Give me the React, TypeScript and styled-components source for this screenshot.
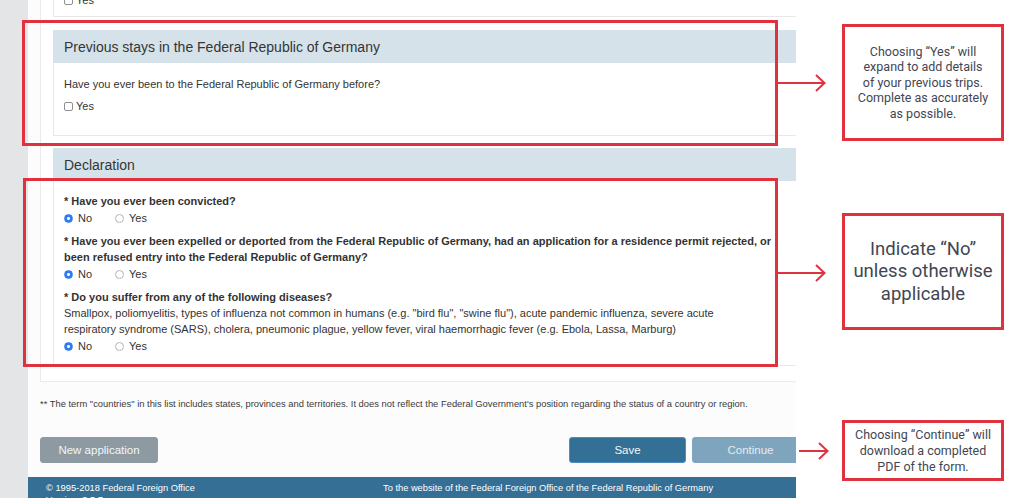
import React from 'react';
import styled, { createGlobalStyle } from 'styled-components';

const colors = {
    red: '#e0313f',
    header: '#d5e2ea',
    border: '#e8e8e8',
    text: '#333333',
    blue: '#346f95',
    note: '#424654',
};

const GlobalStyle = createGlobalStyle`
    html, body {
        margin: 0;
        padding: 0;
        background: #ffffff;
    }
    * {
        box-sizing: border-box;
    }
`;

const Arrow = ({ width }: { width: number }) => (
    <svg width={width} height={18} viewBox={`0 0 ${width} 18`}>
        <line x1={0} y1={9} x2={width - 1} y2={9} stroke={colors.red} strokeWidth={2} />
        <polyline
            points={`${width - 10},1 ${width - 1.5},9 ${width - 10},17`}
            fill="none"
            stroke={colors.red}
            strokeWidth={2}
        />
    </svg>
);

interface RadioGroupProps {
    name: string;
}

const RadioGroup = ({ name }: RadioGroupProps) => (
    <RadioRow>
        <Option>
            <Radio type="radio" name={name} defaultChecked />
            No
        </Option>
        <Option>
            <Radio type="radio" name={name} />
            Yes
        </Option>
    </RadioRow>
);

const App = () => {
    return (
        <Page>
            <GlobalStyle />
            <Sidebar />
            <Main>
                <Card>
                    <TailBody>
                        <CheckRow>
                            <Checkbox type="checkbox" />
                            Yes
                        </CheckRow>
                    </TailBody>

                    <Section $gap={13}>
                        <Highlight $top={-10} $bottom={-10}>
                            <ArrowSlot>
                                <Arrow width={51} />
                            </ArrowSlot>
                        </Highlight>
                        <PanelHeader>Previous stays in the Federal Republic of Germany</PanelHeader>
                        <PanelBody $top={13} $bottom={21}>
                            <Line>Have you ever been to the Federal Republic of Germany before?</Line>
                            <CheckRow $gap={6}>
                                <Checkbox type="checkbox" />
                                Yes
                            </CheckRow>
                        </PanelBody>
                    </Section>

                    <Section $gap={12}>
                        <PanelHeader>Declaration</PanelHeader>
                        <PanelBody $top={12} $bottom={11}>
                            <Highlight $top={-3} $bottom={-2}>
                                <ArrowSlot>
                                    <Arrow width={51} />
                                </ArrowSlot>
                            </Highlight>
                            <Question>
                                <Label>* Have you ever been convicted?</Label>
                                <RadioGroup name="convicted" />
                            </Question>
                            <Question>
                                <Label>
                                    * Have you ever been expelled or deported from the Federal Republic of Germany,
                                    had an application for a residence permit rejected, or
                                    <br />
                                    been refused entry into the Federal Republic of Germany?
                                </Label>
                                <RadioGroup name="expelled" />
                            </Question>
                            <Question>
                                <Label>* Do you suffer from any of the following diseases?</Label>
                                <Line>
                                    Smallpox, poliomyelitis, types of influenza not common in humans (e.g. "bird
                                    flu", "swine flu"), acute pandemic influenza, severe acute
                                    <br />
                                    respiratory syndrome (SARS), cholera, pneumonic plague, yellow fever, viral
                                    haemorrhagic fever (e.g. Ebola, Lassa, Marburg)
                                </Line>
                                <RadioGroup name="diseases" />
                            </Question>
                        </PanelBody>
                    </Section>
                </Card>

                <Footnote>
                    ** The term "countries" in this list includes states, provinces and territories. It does not
                    reflect the Federal Government's position regarding the status of a country or region.
                </Footnote>

                <ButtonRow>
                    <Button $variant="gray">New application</Button>
                    <Button $variant="primary" $push>
                        Save
                    </Button>
                    <Button $variant="light">Continue</Button>
                </ButtonRow>

                <Footer>
                    <FooterLeft>
                        <span>© 1995-2018 Federal Foreign Office</span>
                        <span>Version: 3.5.7</span>
                    </FooterLeft>
                    <span>To the website of the Federal Foreign Office of the Federal Republic of Germany</span>
                </Footer>
            </Main>

            <Notes>
                <Callout $top={24} $height={117} $size={12.5} $lineHeight={15.6}>
                    Choosing “Yes” will
                    <br />
                    expand to add details
                    <br />
                    of your previous trips.
                    <br />
                    Complete as accurately
                    <br />
                    as possible.
                </Callout>
                <Callout $top={72} $height={117} $size={18.5} $lineHeight={22.5}>
                    Indicate “No”
                    <br />
                    unless otherwise
                    <br />
                    applicable
                </Callout>
                <Callout $top={90} $height={61} $size={12.5} $lineHeight={16}>
                    <CalloutArrow>
                        <Arrow width={30} />
                    </CalloutArrow>
                    Choosing “Continue” will
                    <br />
                    download a completed
                    <br />
                    PDF of the form.
                </Callout>
            </Notes>
        </Page>
    );
};

export default App;

const Page = styled.div`
    display: flex;
    width: 1024px;
    height: 498px;
    overflow: hidden;
    position: relative;
    background: #ffffff;
    font-family: 'Liberation Sans', Arial, sans-serif;
    color: ${colors.text};
`;
const Sidebar = styled.div`
    width: 28px;
    flex-shrink: 0;
    background: #e4e5e6;
`;
const Main = styled.div`
    width: 768px;
    flex-shrink: 0;
    display: flex;
    flex-direction: column;
    background: #fcfcfc;

    & > * {
        flex-shrink: 0;
    }
`;
const Card = styled.div`
    margin-left: 12px;
    padding: 0 0 15px 12px;
    background: #ffffff;
    border-left: 1px solid #ebebeb;
    border-bottom: 1px solid #ebebeb;
`;
const TailBody = styled.div`
    display: flow-root;
    height: 17px;
    padding-left: 10px;
    border: 1px solid ${colors.border};
    border-top: none;
    border-right: none;
`;
const Section = styled.div<{ $gap: number }>`
    position: relative;
    margin-top: ${(p) => p.$gap}px;
`;
const PanelHeader = styled.div`
    height: 33px;
    padding-left: 11px;
    display: flex;
    align-items: center;
    background: ${colors.header};
    font-size: 14px;
    color: #353535;
`;
const PanelBody = styled.div<{ $top: number; $bottom: number }>`
    position: relative;
    padding: ${(p) => p.$top}px 0 ${(p) => p.$bottom}px 10px;
    border: 1px solid ${colors.border};
    border-top: none;
    border-right: none;
    font-size: 11px;
    line-height: 16px;
`;
const Highlight = styled.div<{ $top: number; $bottom: number }>`
    position: absolute;
    top: ${(p) => p.$top}px;
    bottom: ${(p) => p.$bottom}px;
    left: -31px;
    right: 18px;
    border: 3px solid ${colors.red};
    pointer-events: none;
    z-index: 2;
`;
const ArrowSlot = styled.div`
    position: absolute;
    left: 100%;
    top: 50%;
    height: 18px;
    margin-top: -9px;
    display: flex;
`;
const Line = styled.div`
    white-space: nowrap;
`;
const CheckRow = styled.label<{ $gap?: number }>`
    display: flex;
    align-items: center;
    gap: 3px;
    height: 16px;
    margin-top: ${(p) => (p.$gap === undefined ? -8 : p.$gap)}px;
    font-size: 11px;
`;
const Checkbox = styled.input`
    appearance: none;
    margin: 0;
    width: 9px;
    height: 9px;
    border: 1px solid #8f8f8f;
    border-radius: 2px;
    background: #ffffff;
`;
const Question = styled.div`
    & + & {
        margin-top: 7px;
    }
`;
const Label = styled.div`
    font-weight: 700;
    white-space: nowrap;
`;
const RadioRow = styled.div`
    display: flex;
    height: 16px;
    margin-top: 1px;
`;
const Option = styled.label`
    width: 51px;
    display: flex;
    align-items: center;
    gap: 5px;
`;
const Radio = styled.input`
    appearance: none;
    margin: 0;
    width: 9px;
    height: 9px;
    border-radius: 50%;
    border: 1px solid #b5b5b5;
    background: #ffffff;

    &:checked {
        border-color: #2d7cf3;
        background: radial-gradient(circle, #ffffff 0 1.3px, #2d7cf3 1.6px);
    }
`;
const Footnote = styled.div`
    margin: 16px 0 0 12px;
    font-size: 9.4px;
    line-height: 12px;
    white-space: nowrap;
    color: #3a3a3a;
`;
const ButtonRow = styled.div`
    display: flex;
    margin-top: 27px;
    padding-left: 12px;
    overflow: hidden;
`;
const Button = styled.button<{ $variant: 'gray' | 'primary' | 'light'; $push?: boolean }>`
    flex-shrink: 0;
    width: ${(p) => (p.$variant === 'gray' ? 118 : 117)}px;
    height: 26px;
    margin-left: ${(p) => (p.$push ? 'auto' : p.$variant === 'light' ? '6px' : '0')};
    margin-right: ${(p) => (p.$variant === 'light' ? '-13px' : '0')};
    border-radius: 3px;
    border: 1px solid
        ${(p) => (p.$variant === 'primary' ? '#4c8dc2' : p.$variant === 'light' ? '#7fa4be' : '#8d9aa1')};
    background: ${(p) => (p.$variant === 'primary' ? colors.blue : p.$variant === 'light' ? '#7fa4be' : '#8d9aa1')};
    color: ${(p) => (p.$variant === 'light' ? '#e3ecf2' : '#f4f6f8')};
    font-family: 'Liberation Sans', Arial, sans-serif;
    font-size: 11.5px;
    padding: 0;
`;
const Footer = styled.div`
    display: flex;
    margin-top: 14px;
    padding: 5px 0 0 18px;
    height: 40px;
    background: #356f96;
    color: #ffffff;
    font-size: 9.3px;
    line-height: 12px;
`;
const FooterLeft = styled.div`
    width: 337px;
    flex-shrink: 0;
    display: flex;
    flex-direction: column;
`;
const Notes = styled.div`
    flex: 1;
    display: flex;
    flex-direction: column;
    padding-left: 46px;
`;
const Callout = styled.div<{ $top: number; $height: number; $size: number; $lineHeight: number }>`
    position: relative;
    flex-shrink: 0;
    width: 162px;
    height: ${(p) => p.$height}px;
    margin-top: ${(p) => p.$top}px;
    border: 3px solid ${colors.red};
    display: flex;
    align-items: center;
    justify-content: center;
    text-align: center;
    font-family: Roboto, 'Noto Sans', sans-serif;
    font-size: ${(p) => p.$size}px;
    line-height: ${(p) => p.$lineHeight}px;
    color: ${colors.note};
`;
const CalloutArrow = styled.div`
    position: absolute;
    right: calc(100% + 16px);
    top: 50%;
    margin-top: -9px;
    height: 18px;
    display: flex;
`;
